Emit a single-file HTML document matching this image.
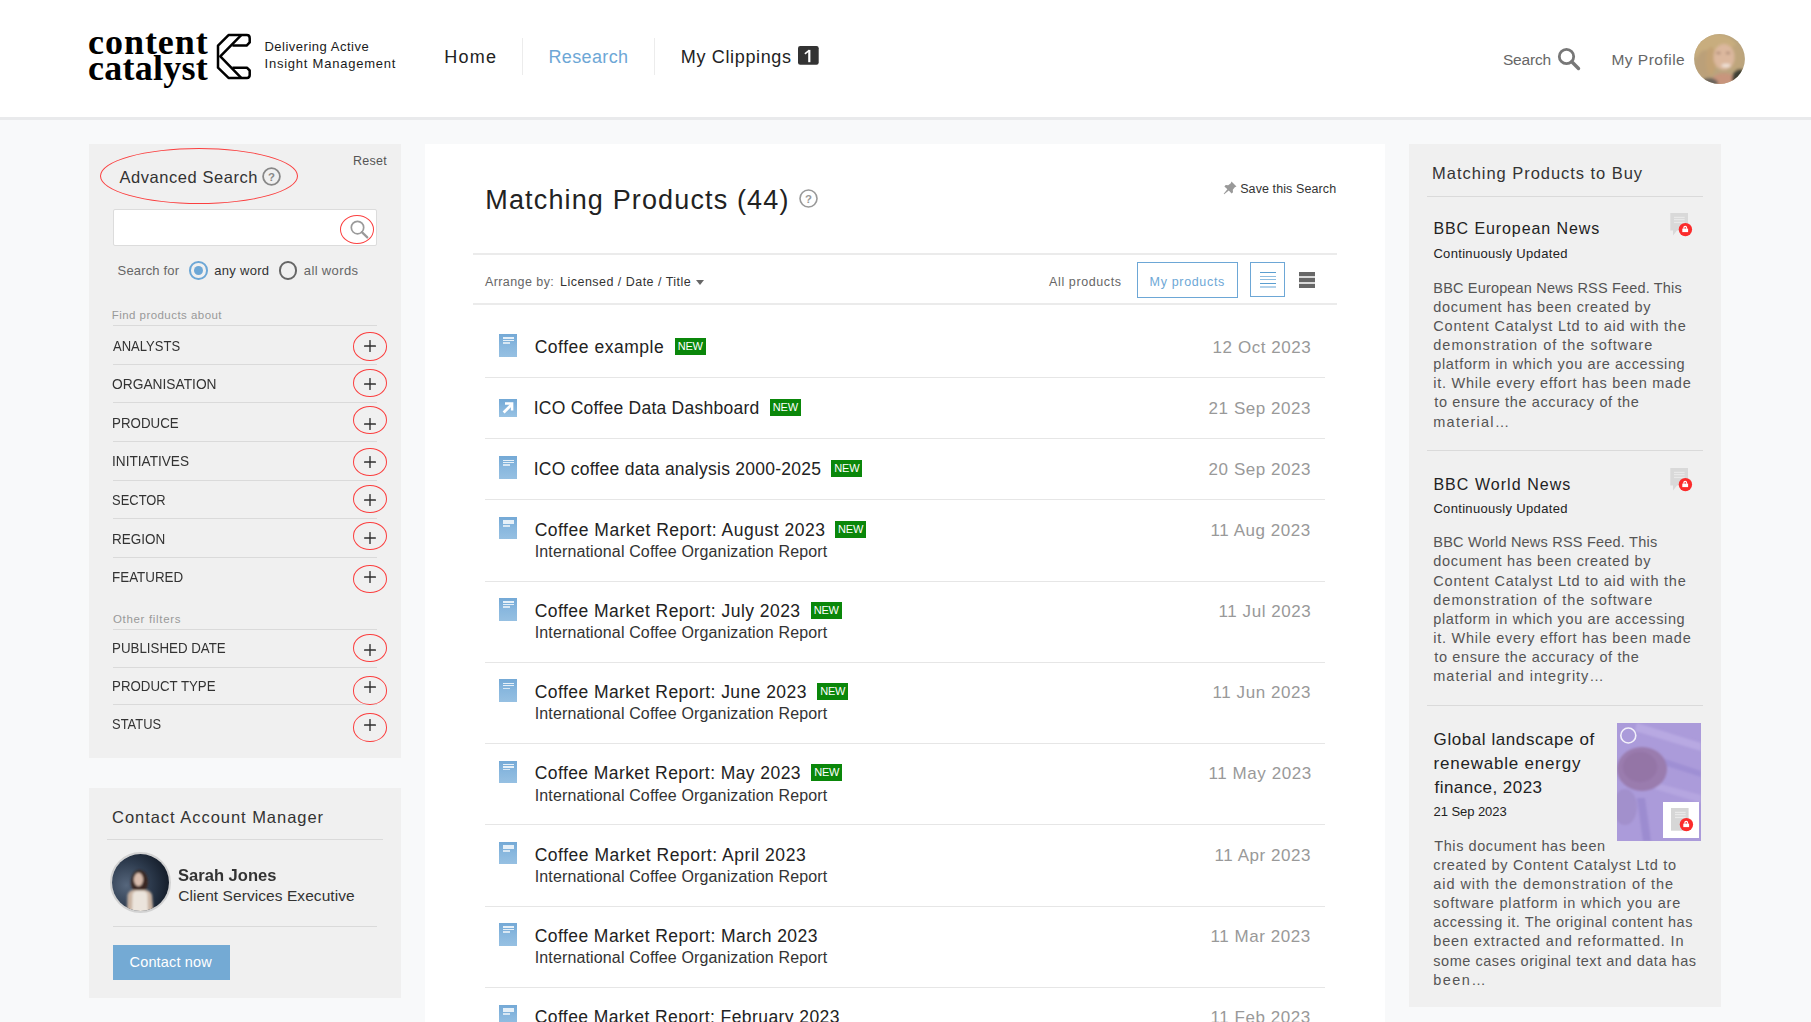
<!DOCTYPE html>
<html><head><meta charset="utf-8"><title>Research</title>
<style>
html,body{margin:0;padding:0}
body{width:1811px;height:1022px;overflow:hidden;position:relative;background:#f8f9fa;font-family:"Liberation Sans",sans-serif}
.t{position:absolute;white-space:nowrap}
.r{position:absolute}
.ell{position:absolute;border-radius:50%;box-sizing:border-box}
.new{position:absolute;width:31px;height:17px;background:#0a870a;color:#fff;font:11px/17px "Liberation Sans",sans-serif;text-align:center;letter-spacing:-0.2px}
</style></head><body>
<div class="r" style="left:0px;top:0px;width:1811px;height:117px;background:#fff;"></div>
<div class="r" style="left:0px;top:117px;width:1811px;height:3px;background:#e9eaec;"></div>
<svg class="r" style="left:212px;top:28px" width="46" height="58" viewBox="0 0 46 58"><g fill="none" stroke="#000" stroke-width="2.5" stroke-linejoin="round">
<path d="M20.4,17.6 L34.6,17.6 L37.7,14.4 L37.7,10.2 Q37.7,7.1 34.8,7.1 L16.5,7.1 L6,17.6 L6,39.7 L16.5,49.9 L35,49.9 Q37.7,49.9 37.7,47 L37.7,42.5 L34.9,39.7 L20.4,39.7"/>
<path d="M29.2,7.1 L8.3,28.4 L29.2,49.9"/></g></svg>
<div class="r" style="left:522px;top:38px;width:1px;height:37px;background:#ececec;"></div>
<div class="r" style="left:654px;top:38px;width:1px;height:37px;background:#ececec;"></div>
<svg class="r" style="left:798px;top:46px" width="21" height="19" viewBox="0 0 21 19"><rect x="0" y="0" width="20.7" height="18.7" rx="2.2" fill="#333"/><path d="M11.3,3.9 V16.2" stroke="#fff" stroke-width="2.2" fill="none"/><path d="M6.9,7.8 L11.2,4.4" stroke="#fff" stroke-width="1.7" fill="none"/></svg>
<svg class="r" style="left:1555px;top:46px" width="28" height="26" viewBox="0 0 28 26"><circle cx="11.5" cy="10.5" r="7.2" fill="none" stroke="#777" stroke-width="2.8"/><line x1="16.8" y1="15.8" x2="23.5" y2="22.5" stroke="#777" stroke-width="3.4" stroke-linecap="round"/></svg>
<svg class="r" style="left:1694px;top:34px" width="51" height="50" viewBox="0 0 51 50"><defs><clipPath id="avc"><ellipse cx="25.5" cy="25" rx="25.4" ry="25"/></clipPath><filter id="avb" x="-20%" y="-20%" width="140%" height="140%"><feGaussianBlur stdDeviation="1.4"/></filter></defs>
<g clip-path="url(#avc)"><rect width="51" height="50" fill="#b9a47e"/><g filter="url(#avb)">
<ellipse cx="22" cy="17" rx="22" ry="17" fill="#c8ad7e"/>
<ellipse cx="12" cy="30" rx="10" ry="14" fill="#bba079"/>
<ellipse cx="17" cy="27" rx="5" ry="14" fill="#c2a274"/>
<ellipse cx="42" cy="24" rx="7" ry="13" fill="#bea57c"/>
<ellipse cx="30" cy="23" rx="10.5" ry="13" fill="#dcb89e"/>
<ellipse cx="24.5" cy="19" rx="2.2" ry="1" fill="#9a7662"/><ellipse cx="34" cy="19" rx="2.2" ry="1" fill="#9a7662"/>
<ellipse cx="32" cy="31.5" rx="4.5" ry="1.8" fill="#f0e4da"/>
<ellipse cx="30" cy="47" rx="12" ry="8" fill="#c8957d"/>
<ellipse cx="46" cy="45" rx="8" ry="10" fill="#3d3f35"/>
<ellipse cx="15" cy="49" rx="9" ry="5" fill="#6a635c"/>
</g></g></svg>

<div class="r" style="left:89px;top:144px;width:312px;height:614px;background:#f0f0f0;"></div>
<div class="r" style="left:89px;top:788px;width:312px;height:210px;background:#f0f0f0;"></div>
<div class="r" style="left:425px;top:144px;width:960px;height:878px;background:#fff;"></div>
<div class="r" style="left:1409px;top:144px;width:312px;height:863px;background:#f0f0f0;"></div>
<div class="ell" style="left:100px;top:148px;width:198.0px;height:56.0px;border:1.25px solid #fb3f3f"></div>
<svg class="r" style="left:262px;top:167px" width="19" height="19" viewBox="0 0 19 19"><circle cx="9.5" cy="9.5" r="8.4" fill="none" stroke="#888" stroke-width="1.8"/><text x="9.5" y="14.44" text-anchor="middle" font-family="Liberation Sans" font-weight="bold" font-size="11.4" fill="#888">?</text></svg>
<div class="r" style="left:113px;top:209px;width:262px;height:35px;background:#fff;border:1px solid #dcdcdc;border-radius:2px"></div>
<div class="ell" style="left:340px;top:215px;width:34.0px;height:29.0px;border:1.25px solid #fb3f3f"></div>
<svg class="r" style="left:347px;top:218px" width="24" height="22" viewBox="0 0 24 22"><circle cx="10.5" cy="9.6" r="6.2" fill="none" stroke="#9a9a9a" stroke-width="1.7"/><line x1="14.9" y1="14.1" x2="20.3" y2="19.4" stroke="#9a9a9a" stroke-width="2.2" stroke-linecap="round"/></svg>
<div class="r" style="left:189.3px;top:261.3px;width:18.6px;height:18.4px;box-sizing:border-box;border:2px solid #6da7d6;border-radius:50%"></div>
<div class="r" style="left:194px;top:266px;width:9px;height:9px;background:#6da7d6;border-radius:50%"></div>
<div class="r" style="left:279.1px;top:261.4px;width:17.6px;height:18.2px;box-sizing:border-box;border:2.2px solid #666;border-radius:50%"></div>
<div class="r" style="left:113px;top:325px;width:264px;height:1px;background:#dadada;"></div>
<div class="r" style="left:113px;top:364px;width:264px;height:1px;background:#dadada;"></div>
<div class="r" style="left:113px;top:402px;width:264px;height:1px;background:#dadada;"></div>
<div class="r" style="left:113px;top:441px;width:264px;height:1px;background:#dadada;"></div>
<div class="r" style="left:113px;top:480px;width:264px;height:1px;background:#dadada;"></div>
<div class="r" style="left:113px;top:518px;width:264px;height:1px;background:#dadada;"></div>
<div class="r" style="left:113px;top:557px;width:264px;height:1px;background:#dadada;"></div>
<div class="r" style="left:113px;top:629px;width:264px;height:1px;background:#dadada;"></div>
<div class="r" style="left:113px;top:667px;width:264px;height:1px;background:#dadada;"></div>
<div class="r" style="left:113px;top:704px;width:264px;height:1px;background:#dadada;"></div>
<div class="ell" style="left:353.2px;top:332px;width:33.6px;height:28.5px;border:1.25px solid #fb3f3f"></div>
<svg class="r" style="left:363.5px;top:340.0px" width="12" height="12" viewBox="0 0 12 12"><path d="M0.6,6 H11.4 M6,0.6 V11.4" stroke="#2e2e2e" stroke-width="1.35" stroke-linecap="round" fill="none"/></svg>
<div class="ell" style="left:353.2px;top:369.2px;width:33.6px;height:28.2px;border:1.25px solid #fb3f3f"></div>
<svg class="r" style="left:363.5px;top:378.0px" width="12" height="12" viewBox="0 0 12 12"><path d="M0.6,6 H11.4 M6,0.6 V11.4" stroke="#2e2e2e" stroke-width="1.35" stroke-linecap="round" fill="none"/></svg>
<div class="ell" style="left:353.2px;top:406.4px;width:33.6px;height:28.1px;border:1.25px solid #fb3f3f"></div>
<svg class="r" style="left:363.5px;top:417.7px" width="12" height="12" viewBox="0 0 12 12"><path d="M0.6,6 H11.4 M6,0.6 V11.4" stroke="#2e2e2e" stroke-width="1.35" stroke-linecap="round" fill="none"/></svg>
<div class="ell" style="left:353.2px;top:448.1px;width:33.6px;height:28.1px;border:1.25px solid #fb3f3f"></div>
<svg class="r" style="left:363.5px;top:455.6px" width="12" height="12" viewBox="0 0 12 12"><path d="M0.6,6 H11.4 M6,0.6 V11.4" stroke="#2e2e2e" stroke-width="1.35" stroke-linecap="round" fill="none"/></svg>
<div class="ell" style="left:353.2px;top:485.3px;width:33.6px;height:28.0px;border:1.25px solid #fb3f3f"></div>
<svg class="r" style="left:363.5px;top:494.3px" width="12" height="12" viewBox="0 0 12 12"><path d="M0.6,6 H11.4 M6,0.6 V11.4" stroke="#2e2e2e" stroke-width="1.35" stroke-linecap="round" fill="none"/></svg>
<div class="ell" style="left:353.2px;top:522.4px;width:33.6px;height:28.0px;border:1.25px solid #fb3f3f"></div>
<svg class="r" style="left:363.5px;top:532.4px" width="12" height="12" viewBox="0 0 12 12"><path d="M0.6,6 H11.4 M6,0.6 V11.4" stroke="#2e2e2e" stroke-width="1.35" stroke-linecap="round" fill="none"/></svg>
<div class="ell" style="left:353.2px;top:564.5px;width:33.6px;height:28.0px;border:1.25px solid #fb3f3f"></div>
<svg class="r" style="left:363.5px;top:571.1px" width="12" height="12" viewBox="0 0 12 12"><path d="M0.6,6 H11.4 M6,0.6 V11.4" stroke="#2e2e2e" stroke-width="1.35" stroke-linecap="round" fill="none"/></svg>
<div class="ell" style="left:353.2px;top:634.1px;width:33.6px;height:28.4px;border:1.25px solid #fb3f3f"></div>
<svg class="r" style="left:363.5px;top:643.6px" width="12" height="12" viewBox="0 0 12 12"><path d="M0.6,6 H11.4 M6,0.6 V11.4" stroke="#2e2e2e" stroke-width="1.35" stroke-linecap="round" fill="none"/></svg>
<div class="ell" style="left:353.2px;top:676.4px;width:33.6px;height:28.2px;border:1.25px solid #fb3f3f"></div>
<svg class="r" style="left:363.5px;top:681.3px" width="12" height="12" viewBox="0 0 12 12"><path d="M0.6,6 H11.4 M6,0.6 V11.4" stroke="#2e2e2e" stroke-width="1.35" stroke-linecap="round" fill="none"/></svg>
<div class="ell" style="left:353.2px;top:713.4px;width:33.6px;height:28.3px;border:1.25px solid #fb3f3f"></div>
<svg class="r" style="left:363.5px;top:718.9px" width="12" height="12" viewBox="0 0 12 12"><path d="M0.6,6 H11.4 M6,0.6 V11.4" stroke="#2e2e2e" stroke-width="1.35" stroke-linecap="round" fill="none"/></svg>
<div class="r" style="left:107px;top:839px;width:276px;height:1px;background:#dadada;"></div>
<div class="r" style="left:113px;top:926px;width:264px;height:1px;background:#dadada;"></div>
<div class="r" style="left:109.5px;top:852px;width:57px;height:57px;border:2px solid #d2d2d2;border-radius:50%;overflow:hidden"><svg width="57" height="57" viewBox="0 0 57 57" style="position:absolute;left:0;top:0"><defs><radialGradient id="cbg" cx="25%" cy="55%" r="80%"><stop offset="0" stop-color="#56667c"/><stop offset="0.5" stop-color="#2f3d50"/><stop offset="1" stop-color="#111925"/></radialGradient><filter id="cbl" x="-20%" y="-20%" width="140%" height="140%"><feGaussianBlur stdDeviation="0.9"/></filter></defs>
<rect width="57" height="57" fill="url(#cbg)"/><g filter="url(#cbl)">
<ellipse cx="27.5" cy="28" rx="8.5" ry="12" fill="#3a2822"/>
<ellipse cx="26.5" cy="25.5" rx="4.6" ry="6.8" fill="#d9bcad"/>
<path d="M15,60 L15.5,41 Q17,36 22,36 L33,36 Q38,36 40,41 L41.5,60 Z" fill="#c9b3a2"/>
<path d="M20,60 L20.5,40 Q22,37 25,37 L31,37 Q34,37 35.5,40 L36,60 Z" fill="#ebe4dc"/>
</g></svg></div>

<div class="r" style="left:113px;top:945px;width:117px;height:35px;background:#74aad4;"></div>
<svg class="r" style="left:799px;top:189px" width="19" height="19" viewBox="0 0 19 19"><circle cx="9.5" cy="9.5" r="8.5" fill="none" stroke="#999" stroke-width="1.6"/><text x="9.5" y="14.44" text-anchor="middle" font-family="Liberation Sans" font-weight="bold" font-size="11.4" fill="#999">?</text></svg>
<svg class="r" style="left:1222px;top:180px" width="16" height="16" viewBox="0 0 16 16"><path d="M9.5,1.5 L14.5,6.5 L12.8,7.2 L10.8,9.8 L11,12.3 L9.6,13.6 L6.8,10.6 L2.2,14.3 L1.7,13.8 L5.4,9.2 L2.4,6.4 L3.7,5 L6.2,5.2 L8.8,3.2 Z" fill="#999"/></svg>
<div class="r" style="left:473px;top:253px;width:864px;height:2px;background:#ebebeb;"></div>
<div class="r" style="left:473px;top:303px;width:864px;height:2px;background:#ebebeb;"></div>
<div class="r" style="left:695.5px;top:280px;width:0;height:0;border-left:4.5px solid transparent;border-right:4.5px solid transparent;border-top:5px solid #666"></div>
<div class="r" style="left:1137px;top:262px;width:99px;height:34px;border:1px solid #6da7d6"></div>
<div class="r" style="left:1250px;top:262px;width:33px;height:33px;border:1px solid #6da7d6"></div>
<div class="r" style="left:1259.6px;top:271.9px;width:16.4px;height:1.4px;background:#5a9ed0"></div>
<div class="r" style="left:1259.6px;top:275.5px;width:16.4px;height:1.4px;background:#8fbde0"></div>
<div class="r" style="left:1259.6px;top:279.1px;width:16.4px;height:1.4px;background:#8fbde0"></div>
<div class="r" style="left:1259.6px;top:282.7px;width:16.4px;height:1.4px;background:#5a9ed0"></div>
<div class="r" style="left:1259.6px;top:286.4px;width:16.4px;height:1.4px;background:#b3d2ea"></div>
<div class="r" style="left:1298.9px;top:272px;width:15.9px;height:15.7px;background:#dadada"></div>
<div class="r" style="left:1298.9px;top:272.1px;width:15.9px;height:3.5px;background:#676767"></div>
<div class="r" style="left:1298.9px;top:277.9px;width:15.9px;height:3.8px;background:#676767"></div>
<div class="r" style="left:1298.9px;top:283.8px;width:15.9px;height:3.9px;background:#676767"></div>
<div class="r" style="left:485px;top:377px;width:840px;height:1px;background:#e6e6e6;"></div>
<div class="r" style="left:485px;top:438px;width:840px;height:1px;background:#e6e6e6;"></div>
<div class="r" style="left:485px;top:499px;width:840px;height:1px;background:#e6e6e6;"></div>
<div class="r" style="left:485px;top:581px;width:840px;height:1px;background:#e6e6e6;"></div>
<div class="r" style="left:485px;top:662px;width:840px;height:1px;background:#e6e6e6;"></div>
<div class="r" style="left:485px;top:743px;width:840px;height:1px;background:#e6e6e6;"></div>
<div class="r" style="left:485px;top:824px;width:840px;height:1px;background:#e6e6e6;"></div>
<div class="r" style="left:485px;top:906px;width:840px;height:1px;background:#e6e6e6;"></div>
<div class="r" style="left:485px;top:987px;width:840px;height:1px;background:#e6e6e6;"></div>
<div class="r" style="left:499.4px;top:334.2px;width:17.8px;height:22.6px;background:linear-gradient(#74a9d6 0%,#88b7de 50%,#96c0e2 100%)"><div style="position:absolute;left:3.7px;top:3.3px;width:11px;height:1.5px;background:#e6f0f8"></div><div style="position:absolute;left:3.7px;top:5.6px;width:11px;height:1.5px;background:#e6f0f8"></div><div style="position:absolute;left:3.7px;top:8.2px;width:7.2px;height:1.7px;background:#d8e7f3"></div></div>
<div class="new" style="left:674.7px;top:338.0px">NEW</div>
<div class="r" style="left:499.4px;top:398.8px;width:17.8px;height:17.8px;background:linear-gradient(#72a8d6,#98c2e3)"><svg style="position:absolute;left:0;top:0" width="18" height="18" viewBox="0 0 18 18"><path d="M4.6,13.6 L12.4,5.8" fill="none" stroke="#fff" stroke-width="2.8"/><path d="M6,4.5 H13.1 V11.6" fill="none" stroke="#fff" stroke-width="2.5"/></svg></div>
<div class="new" style="left:769.9px;top:398.9px">NEW</div>
<div class="r" style="left:499.4px;top:456.3px;width:17.8px;height:22.6px;background:linear-gradient(#74a9d6 0%,#88b7de 50%,#96c0e2 100%)"><div style="position:absolute;left:3.7px;top:3.3px;width:11px;height:1.5px;background:#e6f0f8"></div><div style="position:absolute;left:3.7px;top:5.6px;width:11px;height:1.5px;background:#e6f0f8"></div><div style="position:absolute;left:3.7px;top:8.2px;width:7.2px;height:1.7px;background:#d8e7f3"></div></div>
<div class="new" style="left:831.3px;top:460.1px">NEW</div>
<div class="r" style="left:499.4px;top:516.9px;width:17.8px;height:22.6px;background:linear-gradient(#74a9d6 0%,#88b7de 50%,#96c0e2 100%)"><div style="position:absolute;left:3.7px;top:3.3px;width:11px;height:1.5px;background:#e6f0f8"></div><div style="position:absolute;left:3.7px;top:5.6px;width:11px;height:1.5px;background:#e6f0f8"></div><div style="position:absolute;left:3.7px;top:8.2px;width:7.2px;height:1.7px;background:#d8e7f3"></div></div>
<div class="new" style="left:835.1px;top:520.7px">NEW</div>
<div class="r" style="left:499.4px;top:598.1px;width:17.8px;height:22.6px;background:linear-gradient(#74a9d6 0%,#88b7de 50%,#96c0e2 100%)"><div style="position:absolute;left:3.7px;top:3.3px;width:11px;height:1.5px;background:#e6f0f8"></div><div style="position:absolute;left:3.7px;top:5.6px;width:11px;height:1.5px;background:#e6f0f8"></div><div style="position:absolute;left:3.7px;top:8.2px;width:7.2px;height:1.7px;background:#d8e7f3"></div></div>
<div class="new" style="left:810.7px;top:601.9px">NEW</div>
<div class="r" style="left:499.4px;top:679.4px;width:17.8px;height:22.6px;background:linear-gradient(#74a9d6 0%,#88b7de 50%,#96c0e2 100%)"><div style="position:absolute;left:3.7px;top:3.3px;width:11px;height:1.5px;background:#e6f0f8"></div><div style="position:absolute;left:3.7px;top:5.6px;width:11px;height:1.5px;background:#e6f0f8"></div><div style="position:absolute;left:3.7px;top:8.2px;width:7.2px;height:1.7px;background:#d8e7f3"></div></div>
<div class="new" style="left:817.2px;top:683.2px">NEW</div>
<div class="r" style="left:499.4px;top:760.6px;width:17.8px;height:22.6px;background:linear-gradient(#74a9d6 0%,#88b7de 50%,#96c0e2 100%)"><div style="position:absolute;left:3.7px;top:3.3px;width:11px;height:1.5px;background:#e6f0f8"></div><div style="position:absolute;left:3.7px;top:5.6px;width:11px;height:1.5px;background:#e6f0f8"></div><div style="position:absolute;left:3.7px;top:8.2px;width:7.2px;height:1.7px;background:#d8e7f3"></div></div>
<div class="new" style="left:811.2px;top:764.4px">NEW</div>
<div class="r" style="left:499.4px;top:841.9px;width:17.8px;height:22.6px;background:linear-gradient(#74a9d6 0%,#88b7de 50%,#96c0e2 100%)"><div style="position:absolute;left:3.7px;top:3.3px;width:11px;height:1.5px;background:#e6f0f8"></div><div style="position:absolute;left:3.7px;top:5.6px;width:11px;height:1.5px;background:#e6f0f8"></div><div style="position:absolute;left:3.7px;top:8.2px;width:7.2px;height:1.7px;background:#d8e7f3"></div></div>
<div class="r" style="left:499.4px;top:923.2px;width:17.8px;height:22.6px;background:linear-gradient(#74a9d6 0%,#88b7de 50%,#96c0e2 100%)"><div style="position:absolute;left:3.7px;top:3.3px;width:11px;height:1.5px;background:#e6f0f8"></div><div style="position:absolute;left:3.7px;top:5.6px;width:11px;height:1.5px;background:#e6f0f8"></div><div style="position:absolute;left:3.7px;top:8.2px;width:7.2px;height:1.7px;background:#d8e7f3"></div></div>
<div class="r" style="left:499.4px;top:1004.8px;width:17.8px;height:22.6px;background:linear-gradient(#74a9d6 0%,#88b7de 50%,#96c0e2 100%)"><div style="position:absolute;left:3.7px;top:3.3px;width:11px;height:1.5px;background:#e6f0f8"></div><div style="position:absolute;left:3.7px;top:5.6px;width:11px;height:1.5px;background:#e6f0f8"></div><div style="position:absolute;left:3.7px;top:8.2px;width:7.2px;height:1.7px;background:#d8e7f3"></div></div>
<div class="r" style="left:1427px;top:196px;width:276px;height:1px;background:#dadada;"></div>
<div class="r" style="left:1427px;top:450px;width:276px;height:1px;background:#dadada;"></div>
<div class="r" style="left:1427px;top:705px;width:276px;height:1px;background:#dadada;"></div>
<svg class="r" style="left:1670px;top:213px" width="26" height="26" viewBox="0 0 26 26"><path d="M0.3,0 H18 V17.5 H7 L3,22.5 V17.5 H0.3 Z" fill="#d9d9d9"/><rect x="4" y="3.8" width="10.6" height="1.3" fill="#e9e9e9"/><rect x="4" y="6" width="10.6" height="1.3" fill="#e9e9e9"/><rect x="4" y="8.8" width="10.6" height="1.3" fill="#e9e9e9"/><circle cx="15.4" cy="16.6" r="6.7" fill="#fb2b2b"/><rect x="12.3" y="15.6" width="5.8" height="3.5" fill="#fff"/><path d="M13.9,15.8 V14.6 A1.3,1.3 0 0 1 16.5,14.6 V15.8" fill="none" stroke="#fff" stroke-width="1.2"/></svg>
<svg class="r" style="left:1670px;top:468px" width="26" height="26" viewBox="0 0 26 26"><path d="M0.3,0 H18 V17.5 H7 L3,22.5 V17.5 H0.3 Z" fill="#d9d9d9"/><rect x="4" y="3.8" width="10.6" height="1.3" fill="#e9e9e9"/><rect x="4" y="6" width="10.6" height="1.3" fill="#e9e9e9"/><rect x="4" y="8.8" width="10.6" height="1.3" fill="#e9e9e9"/><circle cx="15.4" cy="16.6" r="6.7" fill="#fb2b2b"/><rect x="12.3" y="15.6" width="5.8" height="3.5" fill="#fff"/><path d="M13.9,15.8 V14.6 A1.3,1.3 0 0 1 16.5,14.6 V15.8" fill="none" stroke="#fff" stroke-width="1.2"/></svg>
<svg class="r" style="left:1617px;top:723px" width="84" height="118" viewBox="0 0 84 118"><defs><filter id="thb" x="-10%" y="-10%" width="120%" height="120%"><feGaussianBlur stdDeviation="1.3"/></filter><clipPath id="thc"><rect width="84" height="118"/></clipPath></defs>
<g clip-path="url(#thc)"><rect width="84" height="118" fill="#ab9bda"/><g filter="url(#thb)">
<path d="M20,0 L84,20 L84,28 L18,8 Z" fill="#b8a9e2"/>
<path d="M30,30 L84,48 L84,54 L28,36 Z" fill="#9f8fd4"/>
<path d="M40,60 L84,72 L84,80 L38,66 Z" fill="#b5a6e0"/>
<path d="M20,75 L26,118 L34,118 L28,75 Z" fill="#9c8cd0"/>
<ellipse cx="25" cy="46" rx="25" ry="22" fill="#9a7cae"/>
<ellipse cx="23" cy="44" rx="17" ry="15" fill="#9474a6"/>
<ellipse cx="8" cy="84" rx="12" ry="18" fill="#a290cc"/>
</g>
<circle cx="11.3" cy="12.5" r="7.5" fill="none" stroke="#fff" stroke-opacity="0.85" stroke-width="1.6"/>
<rect x="46" y="79" width="36" height="36" fill="#fff"/></g></svg>

<svg class="r" style="left:1671.4px;top:808px" width="26" height="26" viewBox="0 0 26 26"><rect x="0" y="0" width="17.6" height="22.7" fill="#d6d6d6"/><rect x="4" y="3.8" width="10.6" height="1.3" fill="#e9e9e9"/><rect x="4" y="6" width="10.6" height="1.3" fill="#e9e9e9"/><rect x="4" y="8.8" width="10.6" height="1.3" fill="#e9e9e9"/><circle cx="15.4" cy="16.6" r="6.7" fill="#fb2b2b"/><rect x="12.3" y="15.6" width="5.8" height="3.5" fill="#fff"/><path d="M13.9,15.8 V14.6 A1.3,1.3 0 0 1 16.5,14.6 V15.8" fill="none" stroke="#fff" stroke-width="1.2"/></svg>
<div class="t" style="left:88.00px;top:24.00px;font-size:36px;line-height:36px;color:#000;letter-spacing:0.967px;font-weight:700;font-family:'Liberation Serif', serif">content</div>
<div class="t" style="left:88.00px;top:49.50px;font-size:36px;line-height:36px;color:#000;letter-spacing:0.257px;font-weight:700;font-family:'Liberation Serif', serif">catalyst</div>
<div class="t" style="left:264.40px;top:40.20px;font-size:13px;line-height:13px;color:#1a1a1a;letter-spacing:0.513px">Delivering Active</div>
<div class="t" style="left:264.50px;top:57.20px;font-size:13px;line-height:13px;color:#1a1a1a;letter-spacing:0.771px">Insight Management</div>
<div class="t" style="left:444.30px;top:48.00px;font-size:18px;line-height:18px;color:#222;letter-spacing:1.200px">Home</div>
<div class="t" style="left:548.50px;top:48.00px;font-size:18px;line-height:18px;color:#6da7d6;letter-spacing:0.357px">Research</div>
<div class="t" style="left:680.80px;top:48.00px;font-size:18px;line-height:18px;color:#222;letter-spacing:0.655px">My Clippings</div>
<div class="t" style="left:1502.90px;top:52.00px;font-size:15.5px;line-height:15.5px;color:#666;letter-spacing:-0.180px">Search</div>
<div class="t" style="left:1611.40px;top:52.00px;font-size:15.5px;line-height:15.5px;color:#666;letter-spacing:0.489px">My Profile</div>
<div class="t" style="left:119.40px;top:169.00px;font-size:16.5px;line-height:16.5px;color:#333;letter-spacing:0.557px">Advanced Search</div>
<div class="t" style="left:352.90px;top:155.00px;font-size:12.5px;line-height:12.5px;color:#555;letter-spacing:0.275px">Reset</div>
<div class="t" style="left:117.60px;top:264.00px;font-size:13px;line-height:13px;color:#666;letter-spacing:0.156px">Search for</div>
<div class="t" style="left:214.20px;top:264.00px;font-size:13px;line-height:13px;color:#333;letter-spacing:0.300px">any word</div>
<div class="t" style="left:303.80px;top:264.00px;font-size:13px;line-height:13px;color:#666;letter-spacing:0.362px">all words</div>
<div class="t" style="left:111.70px;top:310.20px;font-size:11.5px;line-height:11.5px;color:#999;letter-spacing:0.456px">Find products about</div>
<div class="t" style="left:113.00px;top:339.00px;font-size:14.5px;line-height:14.5px;color:#333;letter-spacing:0.000px;transform:scaleX(0.8986);transform-origin:0px 0">ANALYSTS</div>
<div class="t" style="left:112.00px;top:377.00px;font-size:14.5px;line-height:14.5px;color:#333;letter-spacing:0.000px;transform:scaleX(0.9491);transform-origin:1px 0">ORGANISATION</div>
<div class="t" style="left:112.00px;top:416.00px;font-size:14.5px;line-height:14.5px;color:#333;letter-spacing:0.000px;transform:scaleX(0.9183);transform-origin:1px 0">PRODUCE</div>
<div class="t" style="left:112.00px;top:454.20px;font-size:14.5px;line-height:14.5px;color:#333;letter-spacing:0.000px;transform:scaleX(0.9400);transform-origin:1px 0">INITIATIVES</div>
<div class="t" style="left:112.00px;top:493.00px;font-size:14.5px;line-height:14.5px;color:#333;letter-spacing:0.000px;transform:scaleX(0.8897);transform-origin:1px 0">SECTOR</div>
<div class="t" style="left:112.00px;top:532.00px;font-size:14.5px;line-height:14.5px;color:#333;letter-spacing:0.000px;transform:scaleX(0.9309);transform-origin:1px 0">REGION</div>
<div class="t" style="left:112.00px;top:570.00px;font-size:14.5px;line-height:14.5px;color:#333;letter-spacing:0.000px;transform:scaleX(0.9227);transform-origin:1px 0">FEATURED</div>
<div class="t" style="left:113.00px;top:614.20px;font-size:11.5px;line-height:11.5px;color:#999;letter-spacing:0.667px">Other filters</div>
<div class="t" style="left:112.00px;top:641.20px;font-size:14.5px;line-height:14.5px;color:#333;letter-spacing:0.000px;transform:scaleX(0.9179);transform-origin:1px 0">PUBLISHED DATE</div>
<div class="t" style="left:112.00px;top:679.30px;font-size:14.5px;line-height:14.5px;color:#333;letter-spacing:0.000px;transform:scaleX(0.9152);transform-origin:1px 0">PRODUCT TYPE</div>
<div class="t" style="left:112.00px;top:717.00px;font-size:14.5px;line-height:14.5px;color:#333;letter-spacing:0.000px;transform:scaleX(0.8889);transform-origin:1px 0">STATUS</div>
<div class="t" style="left:112.00px;top:809.20px;font-size:16.5px;line-height:16.5px;color:#333;letter-spacing:0.964px">Contact Account Manager</div>
<div class="t" style="left:178.20px;top:867.00px;font-size:17px;line-height:17px;color:#333;letter-spacing:0.000px;transform:scaleX(0.9730);transform-origin:1px 0;font-weight:700">Sarah Jones</div>
<div class="t" style="left:178.20px;top:888.00px;font-size:15.5px;line-height:15.5px;color:#333;letter-spacing:0.067px">Client Services Executive</div>
<div class="t" style="left:129.50px;top:955.10px;font-size:14.5px;line-height:14.5px;color:#fff;letter-spacing:0.170px">Contact now</div>
<div class="t" style="left:485.30px;top:187.00px;font-size:27px;line-height:27px;color:#222;letter-spacing:1.143px">Matching Products (44)</div>
<div class="t" style="left:1240.20px;top:182.60px;font-size:12.5px;line-height:12.5px;color:#333;letter-spacing:0.093px">Save this Search</div>
<div class="t" style="left:484.90px;top:275.70px;font-size:12.5px;line-height:12.5px;color:#666;letter-spacing:0.430px">Arrange by:</div>
<div class="t" style="left:560.10px;top:275.70px;font-size:12.5px;line-height:12.5px;color:#333;letter-spacing:0.473px">Licensed / Date / Title</div>
<div class="t" style="left:1049.10px;top:275.60px;font-size:12.5px;line-height:12.5px;color:#666;letter-spacing:0.600px">All products</div>
<div class="t" style="left:1149.60px;top:275.60px;font-size:12.5px;line-height:12.5px;color:#6da7d6;letter-spacing:0.660px">My products</div>
<div class="t" style="left:534.70px;top:338.80px;font-size:17.5px;line-height:17.5px;color:#222;letter-spacing:0.523px">Coffee example</div>
<div class="t" style="left:1212.60px;top:338.80px;font-size:17px;line-height:17px;color:#999;letter-spacing:0.550px">12 Oct 2023</div>
<div class="t" style="left:533.70px;top:399.70px;font-size:17.5px;line-height:17.5px;color:#222;letter-spacing:0.250px">ICO Coffee Data Dashboard</div>
<div class="t" style="left:1208.60px;top:399.70px;font-size:17px;line-height:17px;color:#999;letter-spacing:0.550px">21 Sep 2023</div>
<div class="t" style="left:533.70px;top:460.90px;font-size:17.5px;line-height:17.5px;color:#222;letter-spacing:0.255px">ICO coffee data analysis 2000-2025</div>
<div class="t" style="left:1208.60px;top:460.90px;font-size:17px;line-height:17px;color:#999;letter-spacing:0.550px">20 Sep 2023</div>
<div class="t" style="left:534.70px;top:521.50px;font-size:17.5px;line-height:17.5px;color:#222;letter-spacing:0.506px">Coffee Market Report: August 2023</div>
<div class="t" style="left:534.70px;top:544.00px;font-size:16px;line-height:16px;color:#333;letter-spacing:0.141px">International Coffee Organization Report</div>
<div class="t" style="left:1210.60px;top:521.50px;font-size:17px;line-height:17px;color:#999;letter-spacing:0.550px">11 Aug 2023</div>
<div class="t" style="left:534.70px;top:602.70px;font-size:17.5px;line-height:17.5px;color:#222;letter-spacing:0.460px">Coffee Market Report: July 2023</div>
<div class="t" style="left:534.70px;top:625.00px;font-size:16px;line-height:16px;color:#333;letter-spacing:0.141px">International Coffee Organization Report</div>
<div class="t" style="left:1218.60px;top:602.70px;font-size:17px;line-height:17px;color:#999;letter-spacing:0.550px">11 Jul 2023</div>
<div class="t" style="left:534.70px;top:684.00px;font-size:17.5px;line-height:17.5px;color:#222;letter-spacing:0.443px">Coffee Market Report: June 2023</div>
<div class="t" style="left:534.70px;top:706.40px;font-size:16px;line-height:16px;color:#333;letter-spacing:0.141px">International Coffee Organization Report</div>
<div class="t" style="left:1212.60px;top:684.00px;font-size:17px;line-height:17px;color:#999;letter-spacing:0.550px">11 Jun 2023</div>
<div class="t" style="left:534.70px;top:765.20px;font-size:17.5px;line-height:17.5px;color:#222;letter-spacing:0.424px">Coffee Market Report: May 2023</div>
<div class="t" style="left:534.70px;top:787.60px;font-size:16px;line-height:16px;color:#333;letter-spacing:0.141px">International Coffee Organization Report</div>
<div class="t" style="left:1208.60px;top:765.20px;font-size:17px;line-height:17px;color:#999;letter-spacing:0.550px">11 May 2023</div>
<div class="t" style="left:534.70px;top:846.50px;font-size:17.5px;line-height:17.5px;color:#222;letter-spacing:0.529px">Coffee Market Report: April 2023</div>
<div class="t" style="left:534.70px;top:868.90px;font-size:16px;line-height:16px;color:#333;letter-spacing:0.141px">International Coffee Organization Report</div>
<div class="t" style="left:1214.60px;top:846.50px;font-size:17px;line-height:17px;color:#999;letter-spacing:0.550px">11 Apr 2023</div>
<div class="t" style="left:534.70px;top:927.80px;font-size:17.5px;line-height:17.5px;color:#222;letter-spacing:0.439px">Coffee Market Report: March 2023</div>
<div class="t" style="left:534.70px;top:949.90px;font-size:16px;line-height:16px;color:#333;letter-spacing:0.141px">International Coffee Organization Report</div>
<div class="t" style="left:1210.60px;top:927.80px;font-size:17px;line-height:17px;color:#999;letter-spacing:0.550px">11 Mar 2023</div>
<div class="t" style="left:534.70px;top:1009.40px;font-size:17.5px;line-height:17.5px;color:#222;letter-spacing:0.418px">Coffee Market Report: February 2023</div>
<div class="t" style="left:1210.60px;top:1009.40px;font-size:17px;line-height:17px;color:#999;letter-spacing:0.550px">11 Feb 2023</div>
<div class="t" style="left:1432.10px;top:165.00px;font-size:16.5px;line-height:16.5px;color:#333;letter-spacing:0.957px">Matching Products to Buy</div>
<div class="t" style="left:1433.40px;top:221.10px;font-size:16px;line-height:16px;color:#222;letter-spacing:0.912px">BBC European News</div>
<div class="t" style="left:1433.40px;top:246.60px;font-size:13px;line-height:13px;color:#222;letter-spacing:0.321px">Continuously Updated</div>
<div class="t" style="left:1433.40px;top:476.80px;font-size:16px;line-height:16px;color:#222;letter-spacing:1.046px">BBC World News</div>
<div class="t" style="left:1433.40px;top:501.50px;font-size:13px;line-height:13px;color:#222;letter-spacing:0.321px">Continuously Updated</div>
<div class="t" style="left:1433.30px;top:280.70px;font-size:14.5px;line-height:14.5px;color:#555;letter-spacing:0.171px">BBC European News RSS Feed. This</div>
<div class="t" style="left:1433.30px;top:299.83px;font-size:14.5px;line-height:14.5px;color:#555;letter-spacing:0.667px">document has been created by</div>
<div class="t" style="left:1433.30px;top:318.96px;font-size:14.5px;line-height:14.5px;color:#555;letter-spacing:0.789px">Content Catalyst Ltd to aid with the</div>
<div class="t" style="left:1433.30px;top:338.09px;font-size:14.5px;line-height:14.5px;color:#555;letter-spacing:0.996px">demonstration of the software</div>
<div class="t" style="left:1433.30px;top:357.22px;font-size:14.5px;line-height:14.5px;color:#555;letter-spacing:0.638px">platform in which you are accessing</div>
<div class="t" style="left:1433.30px;top:376.35px;font-size:14.5px;line-height:14.5px;color:#555;letter-spacing:0.731px">it. While every effort has been made</div>
<div class="t" style="left:1434.30px;top:395.48px;font-size:14.5px;line-height:14.5px;color:#555;letter-spacing:0.625px">to ensure the accuracy of the</div>
<div class="t" style="left:1433.30px;top:414.61px;font-size:14.5px;line-height:14.5px;color:#555;letter-spacing:1.238px">material…</div>
<div class="t" style="left:1433.30px;top:535.30px;font-size:14.5px;line-height:14.5px;color:#555;letter-spacing:0.214px">BBC World News RSS Feed. This</div>
<div class="t" style="left:1433.30px;top:554.43px;font-size:14.5px;line-height:14.5px;color:#555;letter-spacing:0.667px">document has been created by</div>
<div class="t" style="left:1433.30px;top:573.56px;font-size:14.5px;line-height:14.5px;color:#555;letter-spacing:0.789px">Content Catalyst Ltd to aid with the</div>
<div class="t" style="left:1433.30px;top:592.69px;font-size:14.5px;line-height:14.5px;color:#555;letter-spacing:0.996px">demonstration of the software</div>
<div class="t" style="left:1433.30px;top:611.82px;font-size:14.5px;line-height:14.5px;color:#555;letter-spacing:0.638px">platform in which you are accessing</div>
<div class="t" style="left:1433.30px;top:630.95px;font-size:14.5px;line-height:14.5px;color:#555;letter-spacing:0.731px">it. While every effort has been made</div>
<div class="t" style="left:1434.30px;top:650.08px;font-size:14.5px;line-height:14.5px;color:#555;letter-spacing:0.625px">to ensure the accuracy of the</div>
<div class="t" style="left:1433.30px;top:669.21px;font-size:14.5px;line-height:14.5px;color:#555;letter-spacing:0.973px">material and integrity…</div>
<div class="t" style="left:1434.30px;top:838.80px;font-size:14.5px;line-height:14.5px;color:#555;letter-spacing:0.571px">This document has been</div>
<div class="t" style="left:1433.30px;top:857.93px;font-size:14.5px;line-height:14.5px;color:#555;letter-spacing:0.715px">created by Content Catalyst Ltd to</div>
<div class="t" style="left:1433.30px;top:877.06px;font-size:14.5px;line-height:14.5px;color:#555;letter-spacing:0.941px">aid with the demonstration of the</div>
<div class="t" style="left:1433.30px;top:896.19px;font-size:14.5px;line-height:14.5px;color:#555;letter-spacing:0.818px">software platform in which you are</div>
<div class="t" style="left:1433.30px;top:915.32px;font-size:14.5px;line-height:14.5px;color:#555;letter-spacing:0.562px">accessing it. The original content has</div>
<div class="t" style="left:1433.30px;top:934.45px;font-size:14.5px;line-height:14.5px;color:#555;letter-spacing:0.839px">been extracted and reformatted. In</div>
<div class="t" style="left:1433.30px;top:953.58px;font-size:14.5px;line-height:14.5px;color:#555;letter-spacing:0.536px">some cases original text and data has</div>
<div class="t" style="left:1433.30px;top:972.71px;font-size:14.5px;line-height:14.5px;color:#555;letter-spacing:1.425px">been…</div>
<div class="t" style="left:1433.60px;top:730.80px;font-size:17px;line-height:17px;color:#222;letter-spacing:0.572px">Global landscape of</div>
<div class="t" style="left:1433.60px;top:754.80px;font-size:17px;line-height:17px;color:#222;letter-spacing:0.780px">renewable energy</div>
<div class="t" style="left:1434.60px;top:778.50px;font-size:17px;line-height:17px;color:#222;letter-spacing:0.442px">finance, 2023</div>
<div class="t" style="left:1433.60px;top:805.20px;font-size:13px;line-height:13px;color:#222;letter-spacing:-0.070px">21 Sep 2023</div>
</body></html>
